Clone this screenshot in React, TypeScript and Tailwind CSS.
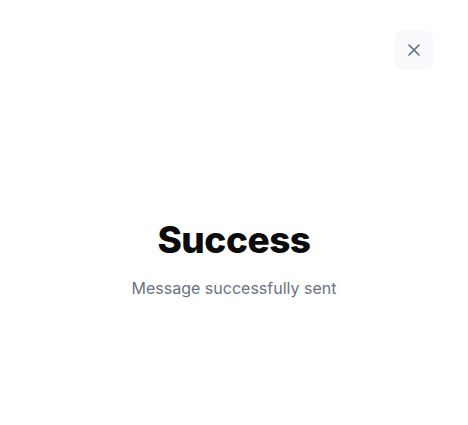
import React from "react";

export default function App() {
  return (
    <div
      className="relative w-[468px] h-[425px] bg-white flex flex-col items-center pt-[218px]"
      style={{ fontFamily: "Inter, 'Noto Sans', sans-serif" }}
    >
      <button className="absolute top-[30px] left-[394px] w-10 h-10 rounded-[10px] bg-[#f7f9fb] flex items-center justify-center">
        <svg width="14" height="14" viewBox="0 0 14 14" fill="none" stroke="#5b6b82" strokeWidth="1.6" strokeLinecap="round">
          <path d="M2 2L12 12M12 2L2 12" />
        </svg>
      </button>
      <h1 className="text-[37px] leading-[44px] font-extrabold text-[#0b0b0b] tracking-[-0.5px]">Success</h1>
      <p className="mt-[14px] text-[16px] leading-[24px] text-[#6b7280]">Message successfully sent</p>
    </div>
  );
}
